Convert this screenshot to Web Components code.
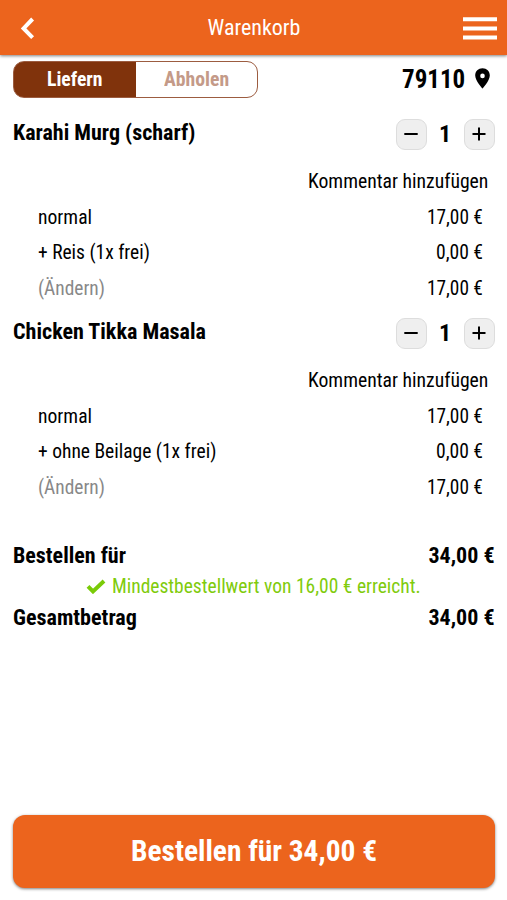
<!DOCTYPE html>
<html lang="de">
<head>
<meta charset="utf-8">
<meta name="viewport" content="width=device-width, initial-scale=1">
<title>Warenkorb</title>
<style>
body {
  margin: 0;
  background: #fff;
  color: #000;
  font-family: 'Roboto Condensed', Roboto, sans-serif;
  font-stretch: condensed;
  font-size: 20px;
}
</style>
</head>
<body>
<cart-page>
  <cart-header slot="header">Warenkorb</cart-header>
  <delivery-bar zip="79110"></delivery-bar>
  <cart-item name="Karahi Murg (scharf)" extra="+ Reis (1x frei)"></cart-item>
  <cart-item name="Chicken Tikka Masala" extra="+ ohne Beilage (1x frei)"></cart-item>
  <cart-total></cart-total>
  <order-button slot="footer">Bestellen für 34,00 €</order-button>
</cart-page>

<script>
// small helper, every element below gets its markup from one template
function define(name, html, setup) {
  const template = document.createElement('template');
  template.innerHTML = html;

  window.customElements.define(name, class extends HTMLElement {
    constructor() {
      super();
      this.attachShadow({ mode: 'open' });
      this.shadowRoot.appendChild(template.content.cloneNode(true));
    }

    connectedCallback() {
      if (setup) setup(this, this.shadowRoot);
    }
  });
}

// text that is set to a fixed width
define('fit-text', `
<style>
:host {
  display: block;
  flex: none;
  white-space: nowrap;
}
span {
  display: inline-block;
  transform-origin: 0 50%;
}
</style>
<span><slot></slot></span>
`, (el, root) => {
  const span = root.querySelector('span');
  const width = Number(el.getAttribute('width'));
  el.style.width = width + 'px';
  span.style.transform = 'scaleX(' + width / span.offsetWidth + ')';
});

define('cart-page', `
<style>
:host {
  display: flex;
  flex-direction: column;
  height: 900px;
  overflow: hidden;
}
main {
  flex: 1;
  padding: 5px 12.5px 0 13px;
}
footer {
  padding: 0 12.5px 12px 13px;
}
</style>
<slot name="header"></slot>
<main><slot></slot></main>
<footer><slot name="footer"></slot></footer>
`);

define('cart-header', `
<style>
:host {
  display: flex;
  align-items: center;
  justify-content: space-between;
  box-sizing: border-box;
  height: 55px;
  padding: 0 10px 0 20px;
  background: #ec641d;
  color: #fff;
  font-size: 22px;
  box-shadow: 0 1px 3px rgba(0, 0, 0, 0.5);
}
svg {
  display: block;
}
.back {
  margin-right: 10px;
}
</style>
<svg class="back" width="15" height="24" viewBox="0 0 15 24"><path d="M12.6 3 3.6 12.4l9 9.3" fill="none" stroke="#fff" stroke-width="4"/></svg>
<fit-text width="93"><slot></slot></fit-text>
<svg width="34" height="24" viewBox="0 0 34 24"><path d="M0 3.2h34M0 12.4h34M0 21.4h34" stroke="#fff" stroke-width="4"/></svg>
`);

define('delivery-bar', `
<style>
:host {
  display: flex;
  justify-content: space-between;
  align-items: center;
  height: 38px;
  font-weight: bold;
}
.toggle {
  display: flex;
  box-sizing: border-box;
  width: 245px;
  height: 37px;
  border: 1px solid #9c5c40;
  border-radius: 11px;
  background: linear-gradient(90deg, #80330c 50%, #fff 50%) border-box;
}
.toggle div {
  flex: 1;
  display: flex;
  align-items: center;
  justify-content: center;
  color: #c49a88;
}
.toggle .active {
  color: #fff;
}
.zip {
  display: flex;
  align-items: center;
  gap: 11px;
  padding-right: 4.5px;
  font-size: 25px;
}
.zip svg {
  margin-top: -1px;
}
</style>
<div class="toggle">
  <div class="active"><fit-text width="56">Liefern</fit-text></div>
  <div><fit-text width="65">Abholen</fit-text></div>
</div>
<div class="zip">
  <fit-text width="62" id="zip"></fit-text>
  <svg width="15" height="21" viewBox="0 0 15 21"><path fill-rule="evenodd" d="M7.5.3C3.3.3.2 3.4.2 7.5c0 5.2 7.3 13.1 7.3 13.1s7.3-7.9 7.3-13.1C14.8 3.4 11.7.3 7.5.3Zm0 5.3a2.3 2.3 0 1 1 0 4.6 2.3 2.3 0 0 1 0-4.6Z"/></svg>
</div>
`, (el, root) => {
  root.querySelector('#zip').textContent = el.getAttribute('zip');
});

define('amount-stepper', `
<style>
:host {
  display: flex;
  align-items: center;
  font-size: 24px;
  font-weight: bold;
}
.button {
  display: flex;
  align-items: center;
  justify-content: center;
  box-sizing: border-box;
  width: 31px;
  height: 31px;
  border: 1px solid #ddd;
  border-radius: 9px;
  background: #efefef;
}
.amount {
  width: 37px;
  text-align: center;
}
</style>
<div class="button"><svg width="14" height="14" viewBox="0 0 14 14"><path d="M.3 7h13.4" stroke="#000" stroke-width="2"/></svg></div>
<div class="amount">1</div>
<div class="button"><svg width="14" height="14" viewBox="0 0 14 14"><path d="M.5 7h13M7 .5v13" stroke="#000" stroke-width="2"/></svg></div>
`);

define('cart-item', `
<style>
:host {
  display: block;
  height: 199px;
}
:host(:first-of-type) {
  margin-top: 18px;
}
.title, .row {
  display: flex;
  align-items: center;
  justify-content: space-between;
}
.title {
  height: 36px;
}
.title fit-text {
  font-size: 22px;
  font-weight: bold;
  padding-bottom: 3px;
}
.comment {
  display: flex;
  justify-content: flex-end;
  align-items: center;
  height: 36px;
  margin-top: 11px;
  padding-right: 7px;
}
.row {
  height: 35.5px;
  padding: 0 12px 0 24.5px;
}
.change {
  color: #888;
}
</style>
<div class="title"><fit-text id="name"></fit-text><amount-stepper></amount-stepper></div>
<div class="comment"><fit-text width="180">Kommentar hinzufügen</fit-text></div>
<div class="row"><fit-text width="54">normal</fit-text><fit-text width="56">17,00 €</fit-text></div>
<div class="row"><fit-text id="extra"></fit-text><fit-text width="47">0,00 €</fit-text></div>
<div class="row"><fit-text class="change" width="67">(Ändern)</fit-text><fit-text width="56">17,00 €</fit-text></div>
`, (el, root) => {
  const widths = {
    'Karahi Murg (scharf)': 183,
    'Chicken Tikka Masala': 192.5,
    '+ Reis (1x frei)': 112,
    '+ ohne Beilage (1x frei)': 178.5
  };
  ['name', 'extra'].forEach(key => {
    const text = document.createElement('fit-text');
    text.textContent = el.getAttribute(key);
    text.setAttribute('width', widths[text.textContent]);
    root.getElementById(key).replaceWith(text);
  });
});

define('cart-total', `
<style>
:host {
  display: block;
  padding-top: 25.5px;
}
.row, .minimum {
  display: flex;
  align-items: center;
  justify-content: space-between;
  height: 31px;
}
.row {
  font-size: 22px;
  font-weight: bold;
}
.minimum {
  justify-content: center;
  gap: 6px;
  padding-right: 1px;
  color: #80cb0c;
}
</style>
<div class="row"><fit-text width="113">Bestellen für</fit-text><fit-text width="66">34,00 €</fit-text></div>
<div class="minimum">
  <svg width="20" height="15" viewBox="0 0 20 15"><path d="m2 7.4 5 5L18 2" fill="none" stroke="#7acb08" stroke-width="4"/></svg>
  <fit-text width="309">Mindestbestellwert von 16,00 € erreicht.</fit-text>
</div>
<div class="row"><fit-text width="123.5">Gesamtbetrag</fit-text><fit-text width="66">34,00 €</fit-text></div>
`);

define('order-button', `
<style>
:host {
  display: flex;
  align-items: center;
  justify-content: center;
  box-sizing: border-box;
  height: 73.5px;
  padding-bottom: 2px;
  border-radius: 12px;
  background: #ec641d;
  color: #fff;
  font-size: 30px;
  font-weight: bold;
  box-shadow: 0 1px 3px rgba(0, 0, 0, 0.5);
}
</style>
<fit-text width="246"><slot></slot></fit-text>
`);
</script>
</body>
</html>
